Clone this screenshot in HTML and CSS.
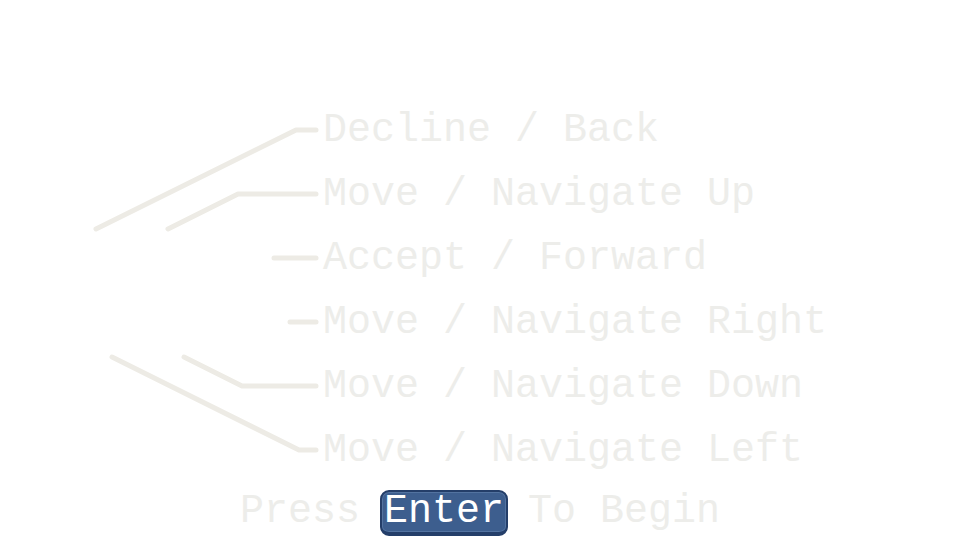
FILE: index.html
```html
<!DOCTYPE html>
<html>
  <head>
    <meta charset="UTF-8" />
    <meta name="viewport" content="width=device-width, initial-scale=1.0" />
    <link rel="stylesheet" href="styles.css">
    <title>controls</title>
  </head>

  <body>
    <svg class="wires" width="960" height="540" viewBox="0 0 960 540">
      <polyline points="96,229 296,130 316,130" />
      <polyline points="168,229 238,194 316,194" />
      <polyline points="274,258 316,258" />
      <polyline points="290,322 316,322" />
      <polyline points="184,357 242,386 316,386" />
      <polyline points="112,357 299,450 316,450" />
    </svg>
    <div class="menu">
      <div class="row">Decline / Back</div>
      <div class="row">Move / Navigate Up</div>
      <div class="row">Accept / Forward</div>
      <div class="row">Move / Navigate Right</div>
      <div class="row">Move / Navigate Down</div>
      <div class="row">Move / Navigate Left</div>
    </div>
    <div class="start">Press <span class="key">Enter</span> To Begin</div>
  </body>
</html>
```

FILE: styles.css
```css
html, body {
  margin: 0px;
  height: 540px;
  overflow: hidden;
  background-color: #ffffff;
}

body {
  font-family: "Liberation Mono", monospace;
  font-size: 40px;
  color: #ededea;
}

.wires {
  position: absolute;
  top: 0px;
  left: 0px;
}

.wires polyline {
  fill: none;
  stroke: #edebe5;
  stroke-width: 5;
  stroke-linecap: round;
  stroke-linejoin: round;
}

.menu {
  padding: 99px 0px 0px 323px;
}

.row {
  line-height: 64px;
  white-space: pre;
}

.start {
  padding-left: 240px;
  margin-top: -3px;
  line-height: 64px;
  white-space: pre;
}

.key {
  display: inline-block;
  line-height: 40px;
  padding: 0px 2px;
  margin: 0px -4px;
  color: #ffffff;
  background-color: #3d5e8e;
  border: 2px solid #243e69;
  border-bottom-width: 4px;
  border-radius: 9px;
  box-shadow: inset 0 0 0 1px #5373a0;
}
```
